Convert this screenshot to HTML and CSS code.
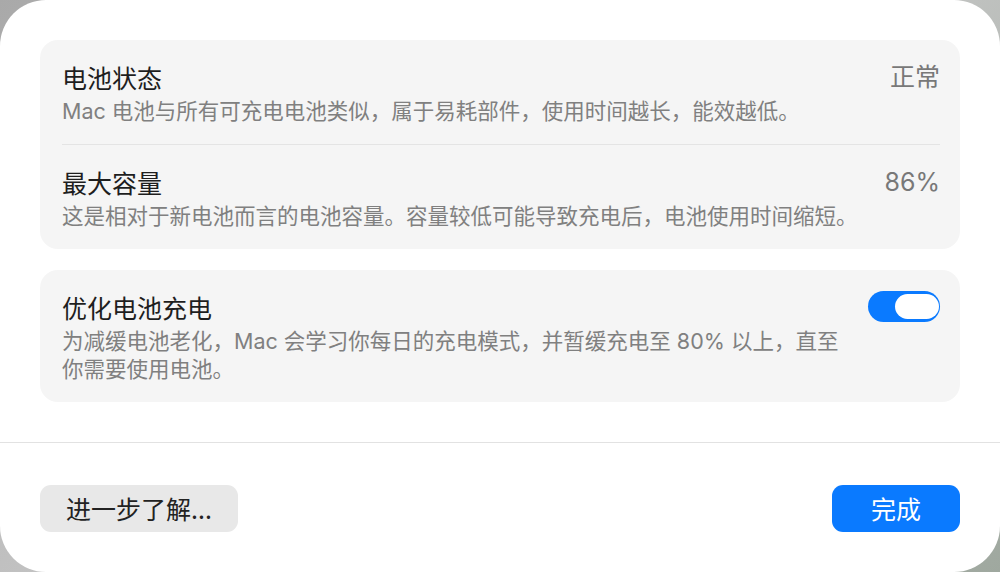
FILE: index.html
```html
<!DOCTYPE html>
<html lang="zh-CN">
<head>
<meta charset="utf-8">
<title>电池</title>
<link rel="stylesheet" href="styles.css">
</head>
<body>
<div class="window">
  <div class="content">
    <section class="card">
      <div class="row">
        <div class="text">
          <div class="title">电池状态</div>
          <div class="desc">Mac 电池与所有可充电电池类似，属于易耗部件，使用时间越长，能效越低。</div>
        </div>
        <div class="value">正常</div>
      </div>
      <div class="divider"></div>
      <div class="row">
        <div class="text">
          <div class="title">最大容量</div>
          <div class="desc">这是相对于新电池而言的电池容量。容量较低可能导致充电后，电池使用时间缩短。</div>
        </div>
        <div class="value">86%</div>
      </div>
    </section>
    <section class="card">
      <div class="row">
        <div class="text narrow">
          <div class="title">优化电池充电</div>
          <div class="desc">为减缓电池老化，Mac 会学习你每日的充电模式，并暂缓充电至 80% 以上，直至你需要使用电池。</div>
        </div>
        <div class="toggle on"><span class="knob"></span></div>
      </div>
    </section>
  </div>
  <div class="footer">
    <button class="btn btn-secondary">进一步了解...</button>
    <button class="btn btn-primary">完成</button>
  </div>
</div>
</body>
</html>
```

FILE: styles.css
```css
* { box-sizing: border-box; }
html, body { margin: 0; padding: 0; }
body {
  width: 1000px;
  height: 572px;
  background: linear-gradient(135deg, #a9a9a9, #c9c9c9 50%, #9fa89f);
  font-family: "Inter", "Noto Sans CJK SC", sans-serif;
  overflow: hidden;
}
.window {
  width: 1000px;
  height: 572px;
  background: #ffffff;
  border-radius: 46px;
  display: flex;
  flex-direction: column;
  overflow: hidden;
}
.content {
  padding: 40px 40px 0;
  display: flex;
  flex-direction: column;
  gap: 21px;
}
.card {
  background: #f5f5f5;
  border-radius: 18px;
  padding: 0 20px 0 22px;
}
.row {
  display: flex;
  align-items: flex-start;
  justify-content: space-between;
  padding: 21px 0 19px;
}
.text { flex: 1; min-width: 0; }
.text.narrow { max-width: 786px; }
.title {
  font-size: 25px;
  line-height: 32px;
  color: #1e1e1e;
  font-weight: 400;
  font-family: "Noto Sans CJK SC", sans-serif;
}
.desc {
  margin-top: 4px;
  font-size: 21.5px;
  line-height: 28px;
  color: #808080;
}
.value {
  font-size: 25px;
  line-height: 32px;
  color: #787878;
  white-space: nowrap;
}
.divider {
  height: 1px;
  background: #e4e4e4;
}
.toggle {
  width: 72px;
  height: 31px;
  border-radius: 16px;
  background: #0a7aff;
  padding: 3px 1px 3px 27px;
  margin-top: 0;
  flex: none;
}
.knob {
  display: block;
  width: 44px;
  height: 25px;
  border-radius: 13px;
  background: #ffffff;
}
.footer {
  margin-top: 40px;
  border-top: 1px solid #e2e2e2;
  padding: 42px 40px 0;
  display: flex;
  justify-content: space-between;
}
.btn {
  height: 47px;
  border: none;
  border-radius: 11px;
  font-family: "Noto Sans CJK SC", sans-serif;
  font-size: 25px;
  line-height: 47px;
  padding: 0;
}
.btn-secondary {
  width: 198px;
  background: #e8e8e8;
  color: #222222;
}
.btn-primary {
  width: 128px;
  background: #0a7aff;
  color: #ffffff;
}
```
